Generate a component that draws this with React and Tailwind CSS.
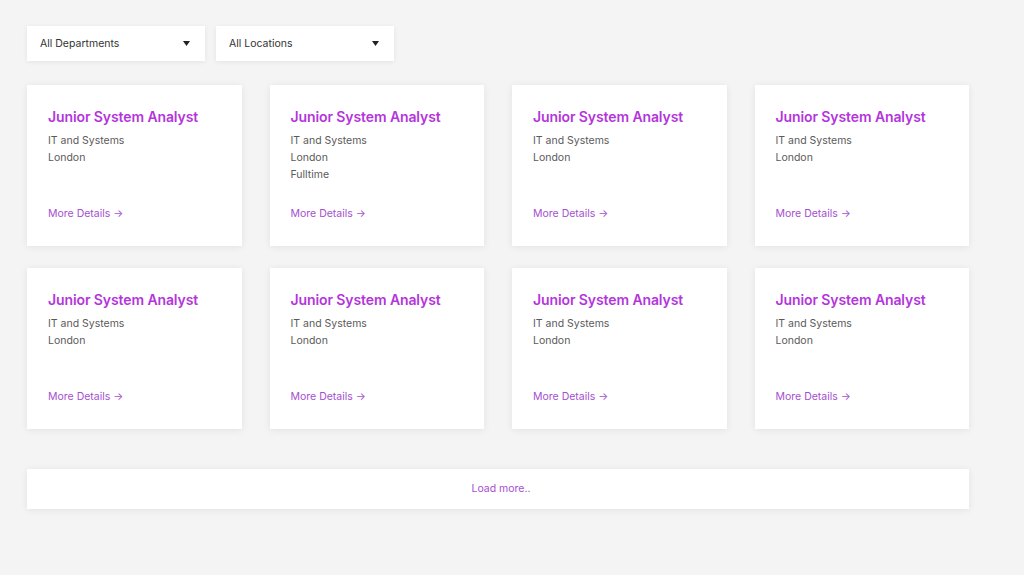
const jobs = [
  { meta: ["IT and Systems", "London"] },
  { meta: ["IT and Systems", "London", "Fulltime"] },
  { meta: ["IT and Systems", "London"] },
  { meta: ["IT and Systems", "London"] },
  { meta: ["IT and Systems", "London"] },
  { meta: ["IT and Systems", "London"] },
  { meta: ["IT and Systems", "London"] },
  { meta: ["IT and Systems", "London"] },
];

const Select = ({ label }) => (
  <div className="w-[178px] h-[35px] bg-white flex items-center justify-between pl-[13px] pr-[15px] shadow-[0_1px_5px_rgba(0,0,0,0.07)]">
    <span className="text-[10.5px] text-[#333]">{label}</span>
    <svg width="7" height="5" viewBox="0 0 7 5">
      <path d="M0 0h7L3.5 5z" fill="#222" />
    </svg>
  </div>
);

const JobCard = ({ meta }) => (
  <div className="h-[161px] bg-white flex flex-col px-[21px] pt-[22px] pb-[24px] shadow-[0_1px_7px_rgba(0,0,0,0.08)]">
    <h3 className="text-[14px] leading-[20px] font-semibold text-[#b435dc] tracking-[-0.1px]">
      Junior System Analyst
    </h3>
    <div className="mt-[5px] text-[10.5px] leading-[17px] text-[#5a5a5a]">
      {meta.map((m, i) => (
        <div key={i}>{m}</div>
      ))}
    </div>
    <a href="#" className="mt-auto text-[10.5px] leading-[17px] text-[#a54fcf]">
      More Details →
    </a>
  </div>
);

export default function App() {
  return (
    <div className="min-h-[575px] bg-[#f4f4f4] pt-[26px] pl-[27px]" style={{ fontFamily: "Inter, 'Liberation Sans', sans-serif" }}>
      <div className="flex gap-[11px]">
        <Select label="All Departments" />
        <Select label="All Locations" />
      </div>
      <div className="w-[942px] mt-[24px] grid grid-cols-4 gap-x-[28px] gap-y-[22px]">
        {jobs.map((j, i) => (
          <JobCard key={i} meta={j.meta} />
        ))}
      </div>
      <button className="mt-[40px] w-[942px] h-[40px] bg-white flex items-center justify-center pl-[6px] text-[10.5px] text-[#a54fcf] shadow-[0_1px_7px_rgba(0,0,0,0.08)]">
        Load more..
      </button>
    </div>
  );
}
